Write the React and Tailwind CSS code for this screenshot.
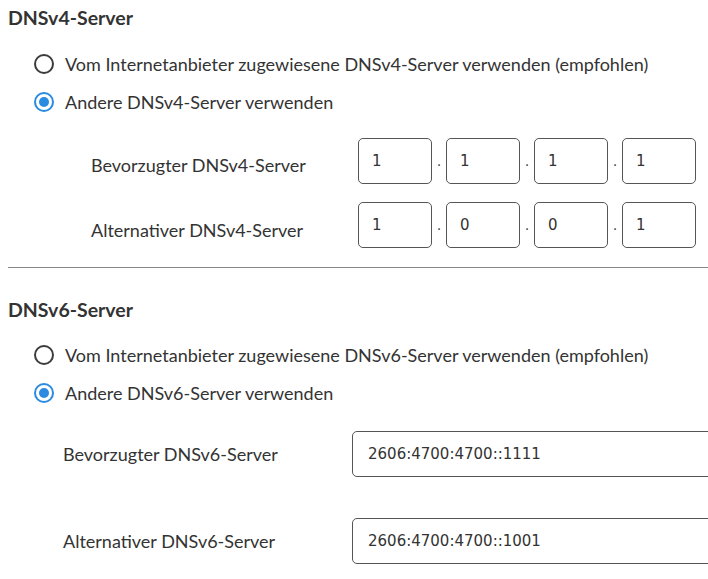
import React from "react";

function Radio({ checked, label }) {
  return (
    <label className="flex items-center gap-[11px] h-[38px]">
      <span
        className={
          "flex h-[20px] w-[20px] shrink-0 items-center justify-center rounded-full border-2 " +
          (checked ? "border-[#2a8be0]" : "border-[#3c3c3c]")
        }
      >
        {checked && <span className="h-[10px] w-[10px] rounded-full bg-[#2a8be0]" />}
      </span>
      <span>{label}</span>
    </label>
  );
}

function IpInput({ parts }) {
  return (
    <div className="flex items-center">
      {parts.map((p, i) => (
        <React.Fragment key={i}>
          {i > 0 && <span className="w-[14px] text-center text-[13px] leading-none">.</span>}
          <div className="flex h-[46px] w-[74px] items-center rounded-[5px] border border-[#555] pl-[13px] font-['DejaVu_Sans'] text-[15px] text-[#333]">
            {p}
          </div>
        </React.Fragment>
      ))}
    </div>
  );
}

export default function App() {
  const font = "font-['Lato',sans-serif]";
  return (
    <div className={"h-[579px] w-[708px] overflow-hidden bg-white text-[18px] text-[#333] " + font}>
      {/* DNSv4 */}
      <div className="pl-[8px] pt-[4px]">
        <h2 className="text-[19.5px] font-bold leading-[28px]">DNSv4-Server</h2>
        <div className="mt-[13px] pl-[26px]">
          <Radio label="Vom Internetanbieter zugewiesene DNSv4-Server verwenden (empfohlen)" />
          <Radio checked label="Andere DNSv4-Server verwenden" />
        </div>
        <div className="mt-[17px] flex flex-col gap-[18px] pl-[83px]">
          <div className="flex items-center">
            <span className="w-[267px] shrink-0 pt-[8px]">Bevorzugter DNSv4-Server</span>
            <IpInput parts={["1", "1", "1", "1"]} />
          </div>
          <div className="flex items-center">
            <span className="w-[267px] shrink-0 pt-[10px]">Alternativer DNSv4-Server</span>
            <IpInput parts={["1", "0", "0", "1"]} />
          </div>
        </div>
      </div>

      <div className="ml-[8px] mt-[19px] border-t border-[#888]" />

      {/* DNSv6 */}
      <div className="pl-[8px] pt-[28px]">
        <h2 className="text-[19.5px] font-bold leading-[28px]">DNSv6-Server</h2>
        <div className="mt-[12px] pl-[26px]">
          <Radio label="Vom Internetanbieter zugewiesene DNSv6-Server verwenden (empfohlen)" />
          <Radio checked label="Andere DNSv6-Server verwenden" />
        </div>
        <div className="mt-[19px] flex flex-col gap-[41px] pl-[55px]">
          <div className="flex items-center">
            <span className="w-[289px] shrink-0">Bevorzugter DNSv6-Server</span>
            <div className="flex h-[46px] w-[400px] shrink-0 items-center rounded-[5px] border border-[#555] pl-[15px] font-['DejaVu_Sans'] text-[15px] text-[#333]">
              2606:4700:4700::1111
            </div>
          </div>
          <div className="flex items-center">
            <span className="w-[289px] shrink-0">Alternativer DNSv6-Server</span>
            <div className="flex h-[46px] w-[400px] shrink-0 items-center rounded-[5px] border border-[#555] pl-[15px] font-['DejaVu_Sans'] text-[15px] text-[#333]">
              2606:4700:4700::1001
            </div>
          </div>
        </div>
      </div>
    </div>
  );
}
